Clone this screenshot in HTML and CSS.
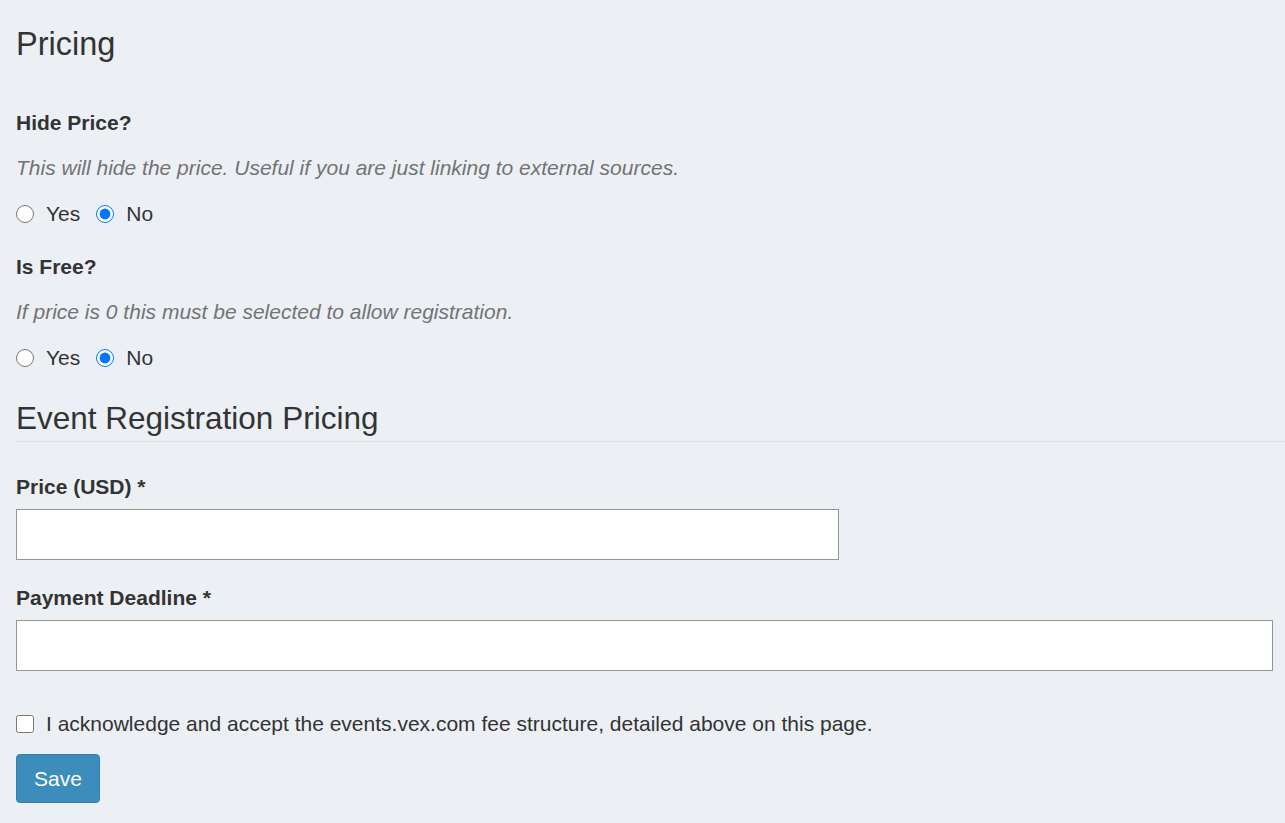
FILE: index.html
```html
<!DOCTYPE html>
<html>
<head>
<meta charset="utf-8">
<link rel="stylesheet" href="styles.css">
</head>
<body>
<div class="content">
  <h3 class="title">Pricing</h3>

  <div class="form-group">
    <div class="label">Hide Price?</div>
    <p class="help">This will hide the price. Useful if you are just linking to external sources.</p>
    <div class="radios">
      <label class="opt"><input type="radio" name="hide"> Yes</label>
      <label class="opt"><input type="radio" name="hide" checked> No</label>
    </div>
  </div>

  <div class="form-group">
    <div class="label">Is Free?</div>
    <p class="help">If price is 0 this must be selected to allow registration.</p>
    <div class="radios">
      <label class="opt"><input type="radio" name="free"> Yes</label>
      <label class="opt"><input type="radio" name="free" checked> No</label>
    </div>
  </div>

  <h3 class="section">Event Registration Pricing</h3>

  <div class="form-group">
    <div class="label">Price (USD) *</div>
    <input class="control control-short" type="text">
  </div>

  <div class="form-group">
    <div class="label">Payment Deadline *</div>
    <input class="control control-wide" type="text">
  </div>

  <label class="check"><input type="checkbox"> I acknowledge and accept the events.vex.com fee structure, detailed above on this page.</label>

  <button class="btn" type="button">Save</button>
</div>
</body>
</html>
```

FILE: styles.css
```css
html, body {
  margin: 0;
  padding: 0;
  background: #ecf0f5;
}
body {
  font-family: "Liberation Sans", Arial, sans-serif;
  font-size: 21px;
  line-height: 30px;
  color: #333;
  height: 823px;
  overflow: hidden;
}
.content {
  padding: 0 0 0 16px;
}
.title {
  font-size: 32.5px;
  font-weight: normal;
  line-height: 36px;
  margin: 26px 0 46px 0;
}
.form-group {
  margin-bottom: 23px;
}
.label {
  font-weight: bold;
  margin-bottom: 7px;
}
.help {
  font-style: italic;
  color: #737373;
  margin: 15px 0 16px 0;
}
.radios {
  display: flex;
  align-items: center;
  gap: 16px;
}
.opt {
  display: inline-flex;
  align-items: center;
  gap: 12px;
}
.opt input {
  width: 18px;
  height: 18px;
  margin: 0;
  accent-color: #0075ff;
}
.section {
  font-size: 31.5px;
  font-weight: normal;
  line-height: 36px;
  margin: 27px 0 30px 0;
  padding-bottom: 5px;
  border-bottom: 1px solid #dfe2e7;
}
.control {
  display: block;
  box-sizing: border-box;
  height: 51px;
  border: 1px solid #949494;
  border-radius: 0;
  background: #fff;
  margin: 0;
  padding: 9px 18px;
  font: inherit;
}
.control-short {
  width: 823px;
}
.control-wide {
  width: 1257px;
}
.check {
  display: flex;
  align-items: center;
  gap: 12px;
  margin-top: 38px;
}
.check input {
  width: 18px;
  height: 18px;
  margin: 0;
}
.btn {
  display: block;
  margin-top: 15px;
  box-sizing: border-box;
  height: 49px;
  padding: 8px 17px;
  font-family: inherit;
  font-size: 21px;
  line-height: 30px;
  color: #fff;
  background: #3c8dbc;
  border: 1px solid #367fa9;
  border-radius: 4px;
}
```
